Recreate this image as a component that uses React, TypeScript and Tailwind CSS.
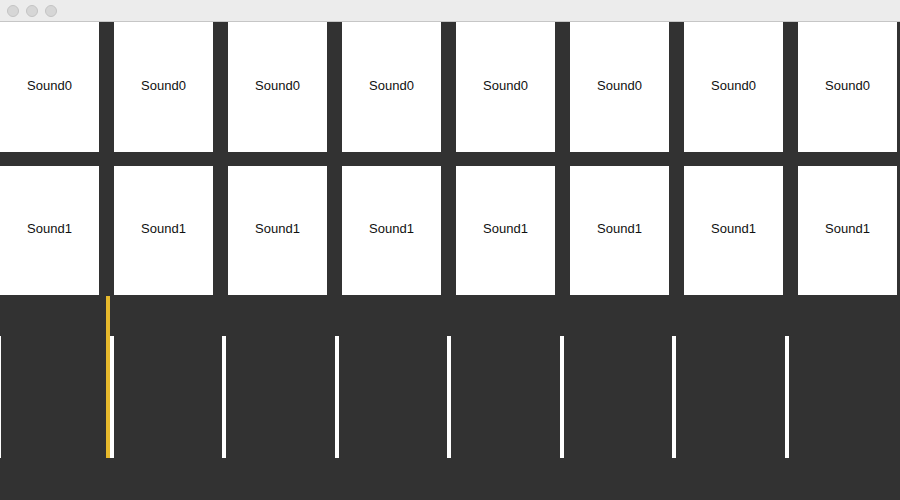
const rows = ["Sound0", "Sound1"];
const cols = [0, 1, 2, 3, 4, 5, 6, 7];

const App = () => {
  return (
    <div className="relative flex h-[500px] w-[900px] flex-col overflow-hidden bg-[#323232] font-['Liberation_Sans',sans-serif]">
      {/* window title bar */}
      <div className="flex h-[22px] items-center gap-[7px] border-b border-[#c6c6c6] bg-[#ececec] pl-[7px]">
        <span className="h-[12px] w-[12px] rounded-full border border-[#c4c4c4] bg-[#d6d6d6]" />
        <span className="h-[12px] w-[12px] rounded-full border border-[#c4c4c4] bg-[#d6d6d6]" />
        <span className="h-[12px] w-[12px] rounded-full border border-[#c4c4c4] bg-[#d6d6d6]" />
      </div>

      {/* pads */}
      <div className="flex flex-col gap-[14px]">
        {rows.map((name, r) => (
          <div
            key={name}
            className={`flex gap-[15px] ${r === 0 ? "h-[130px]" : "h-[129px]"}`}
          >
            {cols.map((c) => (
              <div
                key={c}
                className="flex w-[99px] items-center justify-center bg-white pb-[3px] text-[13px] text-[#111]"
              >
                {name}
              </div>
            ))}
          </div>
        ))}
      </div>

      {/* sequencer track */}
      <div className="relative flex-1">
        <div className="ml-[-3px] flex pt-[41px]">
          {cols.map((c) => (
            <div
              key={c}
              className="h-[122px] w-[112.5px] shrink-0 border-l-4 border-white"
            />
          ))}
        </div>
        <div className="absolute left-[106px] top-[1px] h-[162px] w-[4px] bg-[#e7b92c]" />
      </div>
    </div>
  );
};

export default App;
